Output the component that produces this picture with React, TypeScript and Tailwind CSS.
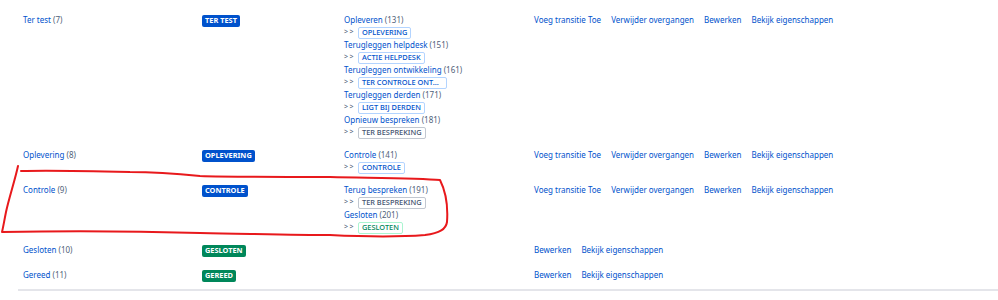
import React from 'react';

type Tone = 'blue' | 'green' | 'gray';

type Transition = { name: string; id: number; target: string; tone: Tone; wide?: boolean };

type Status = {
  name: string;
  count: number;
  badge: string;
  badgeTone: 'blue' | 'green';
  transitions: Transition[];
  full: boolean;
};

const statuses: Status[] = [
  {
    name: 'Ter test',
    count: 7,
    badge: 'TER TEST',
    badgeTone: 'blue',
    full: true,
    transitions: [
      { name: 'Opleveren', id: 131, target: 'OPLEVERING', tone: 'blue' },
      { name: 'Terugleggen helpdesk', id: 151, target: 'ACTIE HELPDESK', tone: 'blue' },
      { name: 'Terugleggen ontwikkeling', id: 161, target: 'TER CONTROLE ONT...', tone: 'blue', wide: true },
      { name: 'Terugleggen derden', id: 171, target: 'LIGT BIJ DERDEN', tone: 'blue' },
      { name: 'Opnieuw bespreken', id: 181, target: 'TER BESPREKING', tone: 'gray' },
    ],
  },
  {
    name: 'Oplevering',
    count: 8,
    badge: 'OPLEVERING',
    badgeTone: 'blue',
    full: true,
    transitions: [{ name: 'Controle', id: 141, target: 'CONTROLE', tone: 'blue' }],
  },
  {
    name: 'Controle',
    count: 9,
    badge: 'CONTROLE',
    badgeTone: 'blue',
    full: true,
    transitions: [
      { name: 'Terug bespreken', id: 191, target: 'TER BESPREKING', tone: 'gray' },
      { name: 'Gesloten', id: 201, target: 'GESLOTEN', tone: 'green' },
    ],
  },
  { name: 'Gesloten', count: 10, badge: 'GESLOTEN', badgeTone: 'green', full: false, transitions: [] },
  { name: 'Gereed', count: 11, badge: 'GEREED', badgeTone: 'green', full: false, transitions: [] },
];

const outline: Record<Tone, string> = {
  blue: 'border-[#b3d4ff] text-[#0052cc]',
  gray: 'border-[#c1c7d0] text-[#42526e]',
  green: 'border-[#abf5d1] text-[#00875a]',
};

const App: React.FC = () => {
  return (
    <div
      className="relative w-[998px] h-[300px] bg-white overflow-hidden text-[8px] text-[#172b4d]"
      style={{ fontFamily: '"Noto Sans", "Liberation Sans", sans-serif' }}
    >
      <div className="pl-[18px] pt-[9px]">
        <div className="border-b-2 border-[#e4e5ea]">
          {statuses.map((s) => (
            <div key={s.name} className="grid grid-cols-[179px_142px_190px_1fr] py-[5px] min-h-[25px]">
              {/* status name */}
              <div className="pl-[5px] leading-[12px]">
                <a className="text-[#0052cc]">{s.name}</a>{' '}
                <span className="text-[#505f79]">({s.count})</span>
              </div>

              {/* status lozenge */}
              <div className="pl-[5px]">
                <span
                  className={`inline-flex items-center h-[12px] px-[3px] rounded-[2px] text-[7.4px] font-bold text-white ${
                    s.badgeTone === 'blue' ? 'bg-[#0052cc]' : 'bg-[#00875a]'
                  }`}
                >
                  {s.badge}
                </span>
              </div>

              {/* transitions */}
              <div className="pl-[5px] flex flex-col">
                {s.transitions.map((t) => (
                  <div key={t.id}>
                    <div className="leading-[12px] whitespace-nowrap">
                      <a className="text-[#0052cc]">{t.name}</a>{' '}
                      <span className="text-[#505f79]">({t.id})</span>
                    </div>
                    <div className="h-[13px] flex items-center gap-[4px]">
                      <span className="text-[#505f79] text-[7px] w-[10px] tracking-[1.5px]">&gt;&gt;</span>
                      <span
                        className={`inline-flex items-center h-[12px] px-[3px] rounded-[2px] border bg-white text-[7.4px] font-medium whitespace-nowrap ${
                          outline[t.tone]
                        } ${t.wide ? 'w-[89px]' : ''}`}
                      >
                        {t.target}
                      </span>
                    </div>
                  </div>
                ))}
              </div>

              {/* actions */}
              <div className="pl-[5px] leading-[12px] flex gap-[10px] text-[#0052cc] whitespace-nowrap">
                {s.full && <a>Voeg transitie Toe</a>}
                {s.full && <a>Verwijder overgangen</a>}
                <a>Bewerken</a>
                <a>Bekijk eigenschappen</a>
              </div>
            </div>
          ))}
        </div>
      </div>

      {/* hand-drawn red annotation */}
      <svg className="absolute inset-0 pointer-events-none" width="998" height="300" viewBox="0 0 998 300">
        <path
          d="M18,166 C15,180 9,198 6,212 C4,222 3,228 2,232 C60,231 130,231 200,233 C260,234 300,235 330,235 C370,237 400,237 425,235 C440,233 446,229 447,222 C448,208 446,192 440,180 C420,178 380,178 330,177 C280,177 230,177 200,176 C170,173 150,172 130,172 C90,171 50,170 21,171"
          fill="none"
          stroke="#e8191c"
          strokeWidth="2"
          strokeLinecap="round"
          strokeLinejoin="round"
        />
      </svg>
    </div>
  );
};

export default App;
